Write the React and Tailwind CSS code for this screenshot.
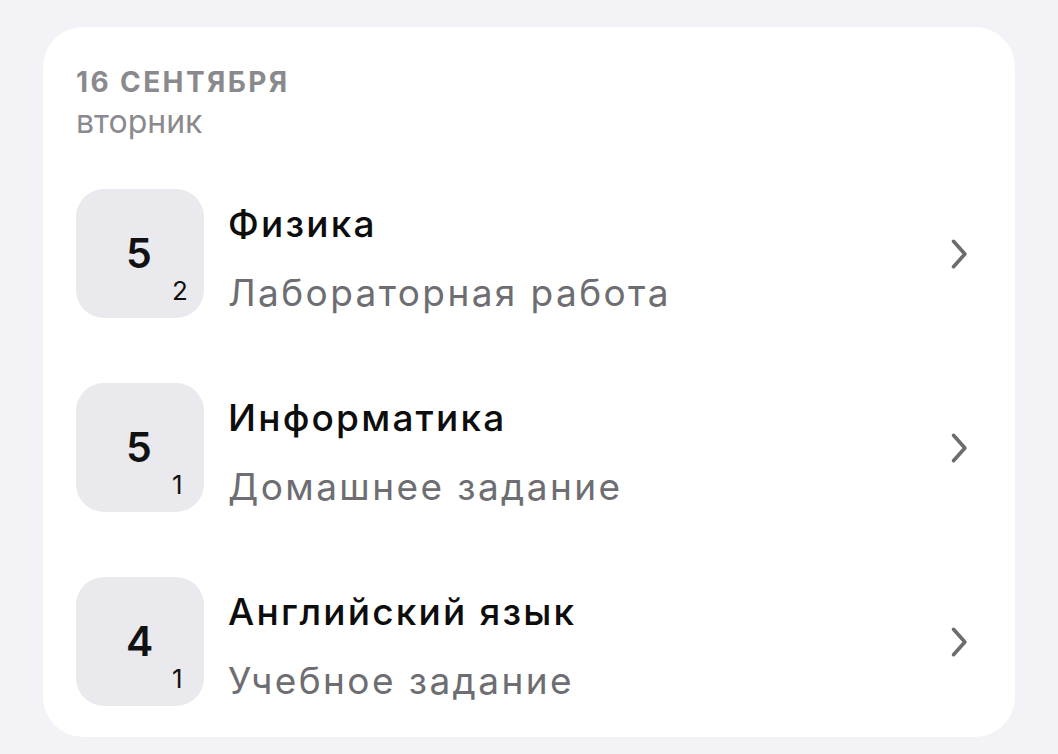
import React from "react";

const rows = [
  { grade: "5", weight: "2", title: "Физика", sub: "Лабораторная работа" },
  { grade: "5", weight: "1", title: "Информатика", sub: "Домашнее задание" },
  { grade: "4", weight: "1", title: "Английский язык", sub: "Учебное задание" },
];

function Chevron() {
  return (
    <svg width="20" height="34" viewBox="0 0 20 34" fill="none" className="shrink-0">
      <path d="M4.5 4.3 L15.9 17 L4.5 29.7" stroke="#6b6b70" strokeWidth="3.6" strokeLinecap="round" strokeLinejoin="round" />
    </svg>
  );
}

export default function App() {
  return (
    <div className="w-[1058px] h-[754px] bg-[#f2f2f7] pt-[27px] pl-[43px]" style={{ fontFamily: "Inter, 'Noto Sans', sans-serif" }}>
      <div className="w-[972px] h-[710px] bg-white rounded-[40px] pl-[33px] pr-[46px] pt-[38px]">
        <div className="text-[28px] font-bold leading-[34px] text-[#8a8a8e] tracking-[2.4px]">16 СЕНТЯБРЯ</div>
        <div className="text-[32px] leading-[38px] text-[#8a8a8e] mt-[4px]">вторник</div>
        <div className="flex flex-col gap-[65px] mt-[48px]">
          {rows.map((r, i) => (
            <div key={i} className="flex items-center">
              <div className="w-[128px] h-[129px] rounded-[28px] bg-[#e9e9ee] relative shrink-0">
                <span className="absolute left-[50px] top-[44px] text-[41px] font-semibold leading-[41px] text-[#111]">{r.grade}</span>
                <span className="absolute left-[96px] top-[89px] text-[26px] leading-[26px] text-[#111]">{r.weight}</span>
              </div>
              <div className="flex-1 self-start mt-[14px] pl-[24px]">
                <div className="text-[37px] font-medium leading-[42px] text-[#0d0d0d] tracking-[2.2px]">{r.title}</div>
                <div className="text-[37px] leading-[42px] text-[#6d6d72] mt-[27px] tracking-[2.4px]">{r.sub}</div>
              </div>
              <Chevron />
            </div>
          ))}
        </div>
      </div>
    </div>
  );
}
